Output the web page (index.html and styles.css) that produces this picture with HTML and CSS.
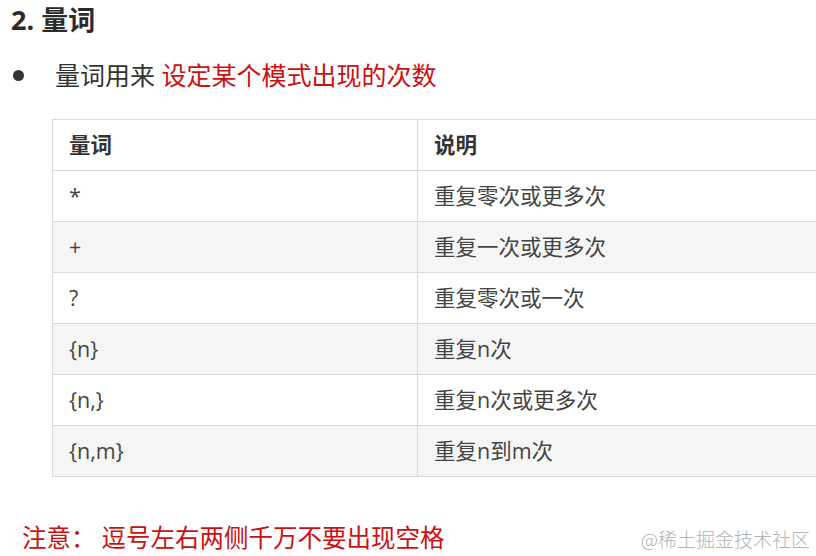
FILE: index.html
```html
<!DOCTYPE html>
<html lang="zh">
<head>
<meta charset="utf-8">
<title>量词</title>
<link rel="stylesheet" href="styles.css">
</head>
<body>
<main class="page">
  <h2 class="title">2. 量词</h2>
  <p class="bullet"><span class="dot"></span><span>量词用来 <span class="red">设定某个模式出现的次数</span></span></p>
  <table class="qtable">
    <colgroup><col class="c1"><col class="c2"></colgroup>
    <thead>
      <tr><th>量词</th><th>说明</th></tr>
    </thead>
    <tbody>
      <tr><td>*</td><td>重复零次或更多次</td></tr>
      <tr><td>+</td><td>重复一次或更多次</td></tr>
      <tr><td>?</td><td>重复零次或一次</td></tr>
      <tr><td>{n}</td><td>重复n次</td></tr>
      <tr><td>{n,}</td><td>重复n次或更多次</td></tr>
      <tr><td>{n,m}</td><td>重复n到m次</td></tr>
    </tbody>
  </table>
  <div class="note-row">
    <p class="note">注意：<span class="gap"></span>逗号左右两侧千万不要出现空格</p>
    <span class="mark">@稀土掘金技术社区</span>
  </div>
</main>
</body>
</html>
```
FILE: styles.css
```css
html, body {
  margin: 0;
  padding: 0;
  background: #fff;
  overflow: hidden;
}
body {
  width: 816px;
  height: 556px;
  font-family: "Open Sans", "Noto Sans CJK SC", sans-serif;
  color: #333;
}
.page {
  display: flex;
  flex-direction: column;
}
.title {
  margin: 0;
  padding-left: 11px;
  font-size: 27px;
  line-height: 40px;
  font-weight: 700;
  color: #2b2b2b;
}
.bullet {
  margin: 15px 0 0 0;
  display: flex;
  align-items: center;
  font-size: 25px;
  line-height: 40px;
  color: #333;
}
.dot {
  width: 11px;
  height: 11px;
  border-radius: 50%;
  background: #333;
  margin-left: 13px;
  margin-right: 31px;
  flex: none;
}
.red {
  color: #cc1010;
}
.qtable {
  margin: 24px 0 0 52px;
  width: 764px;
  border-collapse: collapse;
  table-layout: fixed;
  font-size: 21.5px;
  flex: none;
}
.qtable .c1 { width: 365px; }
.qtable th, .qtable td {
  border: 1px solid #d9d9d9;
  height: 50px;
  padding: 0 16px;
  text-align: left;
  vertical-align: middle;
  line-height: 50px;
  box-sizing: border-box;
}
.qtable th:last-child, .qtable td:last-child {
  border-right: 0;
}
.qtable th {
  font-weight: 700;
  color: #333;
  background: #fff;
}
.qtable td {
  color: #444;
}
.qtable tbody tr:nth-child(even) td {
  background: #f6f6f6;
}
.note-row {
  margin-top: 43px;
  display: flex;
  align-items: center;
  justify-content: space-between;
  padding: 0 6px 0 22px;
}
.note {
  margin: 0;
  font-size: 24.5px;
  line-height: 36px;
  color: #cc1010;
}
.gap {
  display: inline-block;
  width: 6px;
}
.mark {
  font-size: 19px;
  color: #b4b4b4;
  font-family: "Noto Sans CJK SC", sans-serif;
  font-weight: 300;
}
```
